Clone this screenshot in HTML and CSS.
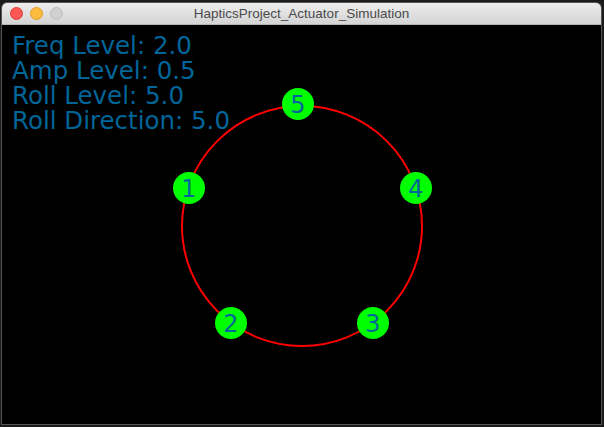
FILE: index.html
```html
<!DOCTYPE html>
<html>
<head>
<meta charset="utf-8">
<link rel="stylesheet" href="styles.css">
</head>
<body>
<div class="window">
  <div class="titlebar">
    <div class="lights">
      <span class="light red"></span>
      <span class="light yellow"></span>
      <span class="light grey"></span>
    </div>
    <div class="title">HapticsProject_Actuator_Simulation</div>
  </div>
  <div class="canvas">
    <svg class="drawing" width="599" height="399" viewBox="0 0 599 399">
      <circle cx="300" cy="201" r="120" fill="none" stroke="#ff0000" stroke-width="2"/>
      <g class="node"><circle cx="296" cy="79" r="16"/><text x="296" y="88">5</text></g>
      <g class="node"><circle cx="187" cy="163" r="16"/><text x="187" y="172">1</text></g>
      <g class="node"><circle cx="414" cy="163" r="16"/><text x="414" y="172">4</text></g>
      <g class="node"><circle cx="229" cy="298" r="16"/><text x="229" y="307">2</text></g>
      <g class="node"><circle cx="371" cy="298" r="16"/><text x="371" y="307">3</text></g>
    </svg>
    <div class="readout">
      <div>Freq Level: 2.0</div>
      <div>Amp Level: 0.5</div>
      <div>Roll Level: 5.0</div>
      <div>Roll Direction: 5.0</div>
    </div>
  </div>
</div>
</body>
</html>
```
FILE: styles.css
```css
html, body {
  margin: 0;
  padding: 0;
}
body {
  width: 604px;
  height: 427px;
  background: #1b1b1b;
  overflow: hidden;
  padding-top: 3px;
  padding-left: 2px;
  box-sizing: border-box;
}
.window {
  width: 599px;
  height: 421px;
  display: flex;
  flex-direction: column;
  border-radius: 5px 5px 0 0;
  overflow: hidden;
  box-shadow: 0 0 0 1px #555;
}
.titlebar {
  height: 21px;
  flex: none;
  background: linear-gradient(#ededed, #d4d4d4);
  border-bottom: 1px solid #b5b5b5;
  display: flex;
  align-items: center;
  position: relative;
}
.lights {
  display: flex;
  gap: 7px;
  padding-left: 8px;
}
.light {
  width: 13px;
  height: 13px;
  border-radius: 50%;
  box-sizing: border-box;
}
.red { background: #fc5753; border: 1px solid #df3d38; }
.yellow { background: #fdbc40; border: 1px solid #de9f24; }
.grey { background: #d0d0d0; border: 1px solid #bdbdbd; }
.title {
  position: absolute;
  left: 0;
  right: 0;
  text-align: center;
  font-family: "Liberation Sans", Arial, sans-serif;
  font-size: 13.5px;
  color: #4a4a4a;
}
.canvas {
  flex: 1;
  background: #000;
  position: relative;
}
.drawing {
  position: absolute;
  left: 0;
  top: 0;
}
.node circle {
  fill: #00ff00;
}
.node text {
  fill: #006699;
  font-family: "DejaVu Sans", sans-serif;
  font-size: 24px;
  text-anchor: middle;
}
.readout {
  position: relative;
  padding: 8px 0 0 10px;
  font-family: "DejaVu Sans", sans-serif;
  font-size: 24.5px;
  line-height: 25px;
  color: #006699;
}
```
